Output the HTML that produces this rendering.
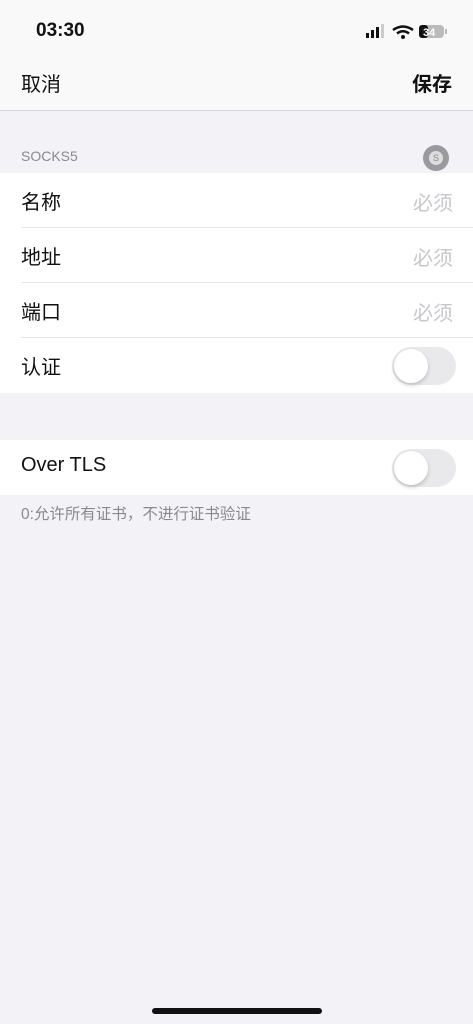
<!DOCTYPE html>
<html><head><meta charset="utf-8"><style>
body{margin:0;width:473px;height:1024px;background:#f2f2f7;font-family:"Liberation Sans","Noto Sans CJK SC",sans-serif;position:relative;overflow:hidden}
.top{position:absolute;left:0;top:0;width:473px;height:110px;background:#f9f9f9;border-bottom:1px solid #d8d8dc}
.abs{position:absolute}
.row{position:absolute;left:0;width:473px;height:55px;background:#fff}
.lbl{position:absolute;left:21px;top:13px;font-size:20px;color:#111}
.ph{position:absolute;right:20px;top:14px;font-size:20px;color:#c7c7cc}
.sep{position:absolute;left:21px;right:0;bottom:0;height:1px;background:#e6e6ea}
.tg{position:absolute;right:17px;top:9px;width:64px;height:38px;border-radius:19px;background:#e9e9eb}
.tg:after{content:"";position:absolute;left:2px;top:2px;width:34px;height:34px;border-radius:50%;background:#fff;box-shadow:0 2px 4px rgba(0,0,0,.2)}
</style></head><body>
<div class="top">
<div class="abs" style="left:36px;top:20px;font-size:19px;font-weight:bold;color:#111">03:30</div>
<div class="abs" style="left:366px;top:24px;">
<svg width="90" height="16"><g fill="#111"><rect x="0" y="9" width="3" height="5"/><rect x="5" y="6" width="3" height="8"/><rect x="10" y="3" width="3" height="11"/><rect x="15" y="0" width="3" height="14" fill="#ccc"/></g>
<path d="M27 6 Q37 -1 47 6" stroke="#111" stroke-width="2.5" fill="none"/><path d="M31 9.5 Q37 5 43 9.5" stroke="#111" stroke-width="2.5" fill="none"/><circle cx="37" cy="13" r="2" fill="#111"/>
<rect x="53" y="1" width="25" height="13" rx="4" fill="#bbb"/><rect x="53" y="1" width="9" height="13" rx="3" fill="#111"/><text x="57" y="12" font-size="11" font-weight="bold" fill="#fff" font-family="Liberation Sans">34</text><rect x="79" y="5" width="2" height="5" fill="#bbb"/></svg></div>
<div class="abs" style="left:21px;top:68px;font-size:20px;color:#111">取消</div>
<div class="abs" style="right:21px;top:68px;font-size:20px;font-weight:bold;color:#111">保存</div>
</div>
<div class="abs" style="left:21px;top:148px;font-size:14px;color:#8a8a8e">SOCKS5</div>
<div class="abs" style="left:423px;top:145px;width:26px;height:26px;border-radius:50%;background:#9a9a9e"><div style="position:absolute;left:6px;top:6px;width:14px;height:14px;border-radius:50%;background:#ddd;font-size:9px;text-align:center;line-height:14px;color:#888">S</div></div>
<div class="row" style="top:173px"><div class="lbl">名称</div><div class="ph">必须</div><div class="sep"></div></div>
<div class="row" style="top:228px"><div class="lbl">地址</div><div class="ph">必须</div><div class="sep"></div></div>
<div class="row" style="top:283px"><div class="lbl">端口</div><div class="ph">必须</div><div class="sep"></div></div>
<div class="row" style="top:338px"><div class="lbl">认证</div><div class="tg"></div></div>
<div class="row" style="top:440px"><div class="lbl" style="top:14px">Over TLS</div><div class="tg"></div></div>
<div class="abs" style="left:21px;top:502px;font-size:15.5px;color:#8a8a8e">0:允许所有证书，不进行证书验证</div>
<div class="abs" style="left:152px;top:1008px;width:170px;height:6px;border-radius:3px;background:#111"></div>
</body></html>
